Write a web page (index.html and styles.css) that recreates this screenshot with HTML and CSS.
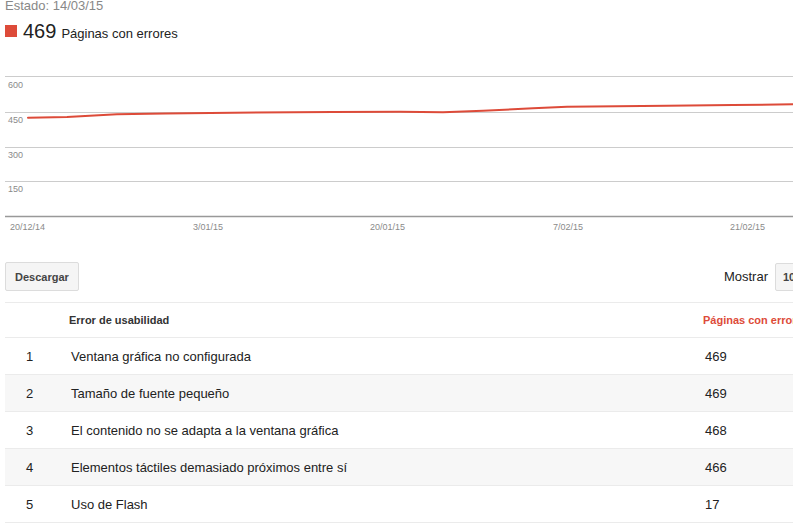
FILE: index.html
```html
<!DOCTYPE html>
<html lang="es">
<head>
    <meta charset="UTF-8">
    <title>Usabilidad móvil</title>
    <link rel="stylesheet" href="styles.css">
</head>
<body>
<div class="page">

    <!-- Status line -->
    <div class="status">Estado: 14/03/15</div>

    <!-- Summary -->
    <div class="summary"><span class="swatch"></span><span class="count">469</span>Páginas con errores</div>

    <!-- Chart -->
    <svg class="chart" width="830" height="170" viewBox="0 0 830 170">
        <g class="grid-lines">
            <line x1="0" y1="6.5" x2="830" y2="6.5"/>
            <line x1="0" y1="42.5" x2="830" y2="42.5"/>
            <line x1="0" y1="77.5" x2="830" y2="77.5"/>
            <line x1="0" y1="111.5" x2="830" y2="111.5"/>
        </g>
        <line class="axis" x1="0" y1="146.5" x2="830" y2="146.5"/>
        <g class="y-labels">
            <text x="3" y="18">600</text>
            <text x="3" y="53">450</text>
            <text x="3" y="88">300</text>
            <text x="3" y="122">150</text>
        </g>
        <polyline class="series" points="23,47.7 62,47 112,44.3 160,43.6 228,42.7 328,42 395,41.7 438,42.3 478,40.8 528,38.3 562,36.7 662,35.7 728,35 788,34.3 830,34"/>
        <g class="x-labels">
            <text x="5" y="160">20/12/14</text>
            <text x="188" y="160">3/01/15</text>
            <text x="365" y="160">20/01/15</text>
            <text x="548" y="160">7/02/15</text>
            <text x="725" y="160">21/02/15</text>
        </g>
    </svg>

    <!-- Toolbar -->
    <div class="toolbar">
        <button class="btn">Descargar</button>
        <div class="show">
            <span>Mostrar</span>
            <div class="select">10<span class="caret"></span></div>
        </div>
    </div>

    <!-- Error table -->
    <div class="table">
        <div class="row head">
            <div class="num"></div>
            <div class="name">Error de usabilidad</div>
            <div class="val sorted">Páginas con errores</div>
        </div>
        <div class="row">
            <div class="num">1</div>
            <div class="name">Ventana gráfica no configurada</div>
            <div class="val">469</div>
        </div>
        <div class="row">
            <div class="num">2</div>
            <div class="name">Tamaño de fuente pequeño</div>
            <div class="val">469</div>
        </div>
        <div class="row">
            <div class="num">3</div>
            <div class="name">El contenido no se adapta a la ventana gráfica</div>
            <div class="val">468</div>
        </div>
        <div class="row">
            <div class="num">4</div>
            <div class="name">Elementos táctiles demasiado próximos entre sí</div>
            <div class="val">466</div>
        </div>
        <div class="row">
            <div class="num">5</div>
            <div class="name">Uso de Flash</div>
            <div class="val">17</div>
        </div>
    </div>

</div>
</body>
</html>
```
FILE: styles.css
```css
/* Page */
html, body {
    margin: 0;
    overflow: hidden;
    background: #fff;
}
body {
    font-family: "Liberation Sans", Arial, sans-serif;
    font-size: 13px;
    color: #222;
}
.page {
    width: 830px;
    padding-left: 5px;
}

/* Status + summary */
.status {
    color: #888;
    line-height: 15px;
    margin-top: -2px;
}
.summary {
    height: 25px;
    line-height: 23px;
    margin-top: 7px;
    white-space: nowrap;
}
.swatch {
    display: inline-block;
    width: 12px;
    height: 12px;
    background: #dd4b39;
    margin-right: 6px;
    margin-bottom: 1px;
}
.count {
    font-size: 20px;
    margin-right: 5px;
}

/* Chart */
.chart {
    display: block;
    margin-top: 25px;
}
.grid-lines line {
    stroke: #cccccc;
    stroke-width: 1;
}
.axis {
    stroke: #999;
    stroke-width: 1.5;
}
.chart text {
    font-family: "Liberation Sans", Arial, sans-serif;
    font-size: 9px;
    fill: #8a8a8a;
}
.series {
    fill: none;
    stroke: #dd4b39;
    stroke-width: 2;
    stroke-linejoin: round;
    stroke-linecap: round;
}

/* Toolbar */
.toolbar {
    display: flex;
    justify-content: space-between;
    align-items: center;
    margin-top: 22px;
}
.btn {
    height: 29px;
    padding: 0 9px;
    font-family: "Liberation Sans", Arial, sans-serif;
    font-size: 11px;
    font-weight: bold;
    color: #444;
    background: #f5f5f5;
    border: 1px solid #dcdcdc;
    border-radius: 2px;
}
.show {
    display: flex;
    align-items: center;
    gap: 7px;
}
.select {
    box-sizing: border-box;
    width: 60px;
    height: 28px;
    line-height: 26px;
    padding-left: 7px;
    font-size: 11px;
    font-weight: bold;
    color: #444;
    background: #f5f5f5;
    border: 1px solid #dcdcdc;
    border-radius: 2px;
}
.caret {
    display: inline-block;
    margin-left: 14px;
    border-left: 4px solid transparent;
    border-right: 4px solid transparent;
    border-top: 4px solid #666;
    vertical-align: middle;
}

/* Table */
.table {
    margin-top: 11px;
    border-top: 1px solid #ebebeb;
}
.row {
    display: grid;
    grid-template-columns: 64px 634px 1fr;
    align-items: center;
    height: 36px;
    border-bottom: 1px solid #ebebeb;
    white-space: nowrap;
}
.row:nth-child(odd):not(.head) {
    background: #f7f7f7;
}
.row.head {
    height: 34px;
    font-size: 11px;
    font-weight: bold;
    color: #333;
}
.num {
    padding-left: 21px;
}
.name, .val {
    padding-left: 2px;
}
.head .name, .head .val {
    padding-left: 0;
}
.sorted {
    color: #dd4b39;
}
```
